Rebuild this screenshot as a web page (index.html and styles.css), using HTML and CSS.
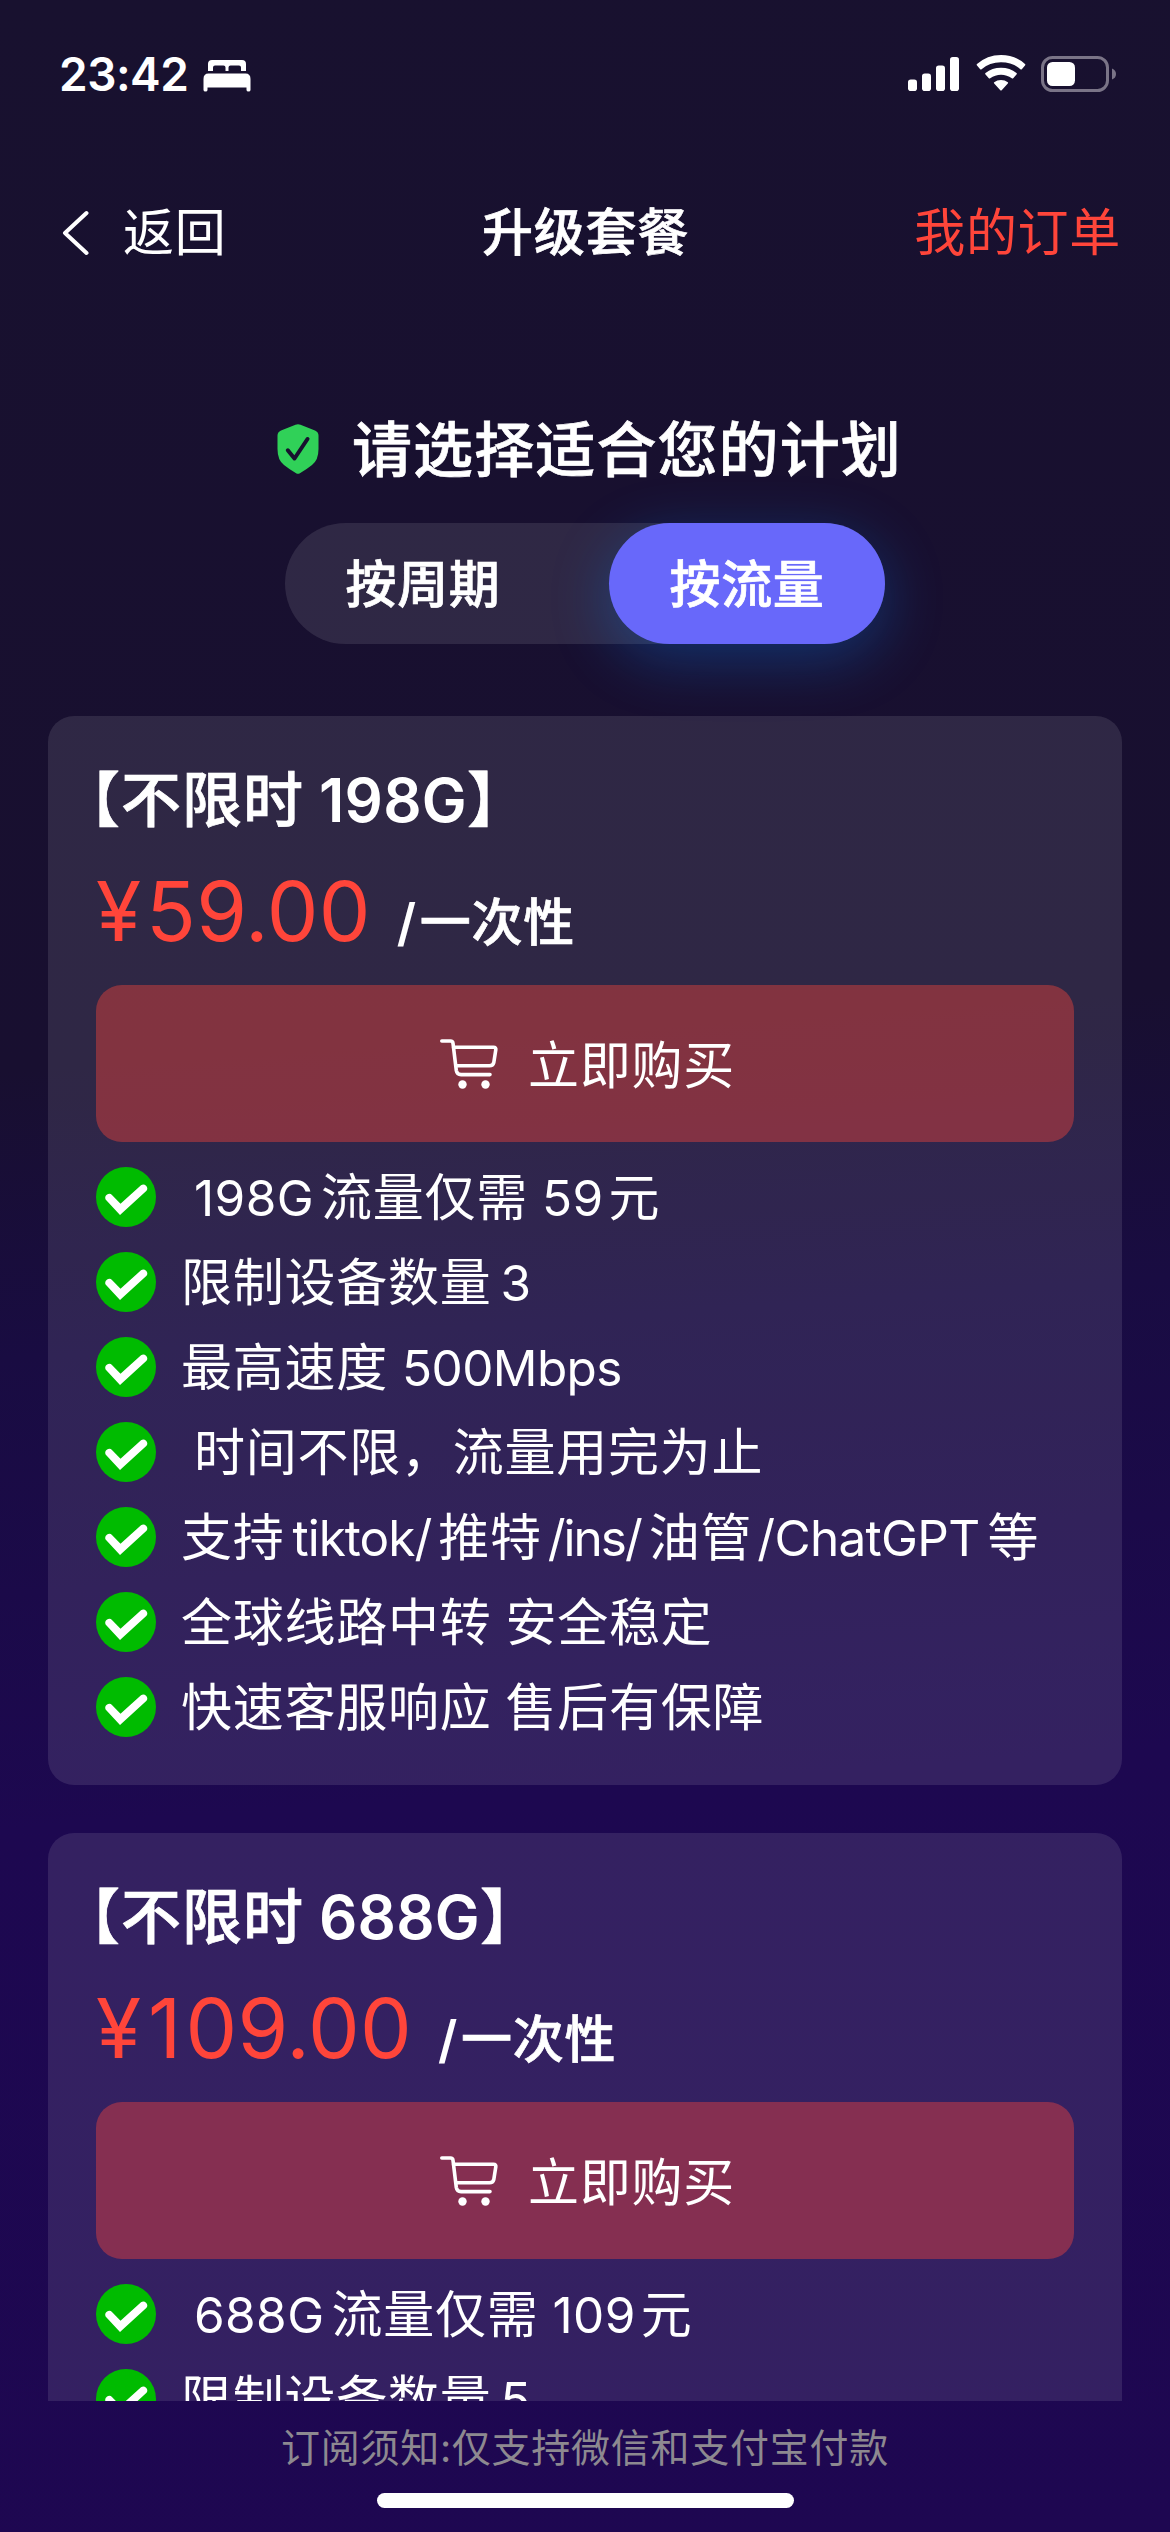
FILE: index.html
```html
<!DOCTYPE html>
<html lang="zh-CN">
<head>
<meta charset="utf-8">
<title>升级套餐</title>
<link rel="stylesheet" href="styles.css">
</head>
<body>
<svg width="0" height="0" class="defs" aria-hidden="true">
  <symbol id="cart" viewBox="0 0 58 50">
    <g fill="none" stroke="#fff" stroke-width="3.6" stroke-linecap="round" stroke-linejoin="round">
      <path d="M1.800 2H10.500Q12.700 2 13 4.200L16.300 31.500Q17 35.600 21 35.600H50"/>
      <path d="M13.600 8.300H53.500Q56.200 8.300 55.800 10.800L53.800 23.500Q53 26.700 49.500 26.700H16.200"/>
    </g>
    <circle cx="22.500" cy="45.500" r="4.200" fill="#fff"/>
    <circle cx="45.500" cy="45.500" r="4.200" fill="#fff"/>
  </symbol>
  <symbol id="check" viewBox="0 0 60 60">
    <circle cx="30" cy="30" r="30" fill="#00bb00"/>
    <path d="M9.600 32.500A4 4 0 0 1 16.200 28.200L24.500 36.800L45 18.200A4 4 0 0 1 50.500 23.800L24 48Z" fill="#fff"/>
  </symbol>
</svg>

<div class="screen">
  <header class="status">
    <div class="status-left">
      <span class="clock">23:42</span>
      <svg class="bed" width="48" height="33" viewBox="0 0 48 33" fill="#fff"><path d="M5 12V5Q5 1 9 1H39Q43 1 43 5V12H38V8.500Q38 6.500 36 6.500H27.500Q25.500 6.500 25.500 8.500V12H22.500V8.500Q22.500 6.500 20.500 6.500H12Q10 6.500 10 8.500V12ZM5.500 14.500H42.500Q47.500 14.500 47.500 20V31Q47.500 32.500 45.500 32.500Q43.500 32.500 43.500 31V28.500H4.500V31Q4.500 32.500 2.500 32.500Q.5 32.500 .5 31V20Q.5 14.500 5.500 14.500Z"/></svg>
    </div>
    <div class="status-right">
      <svg width="52" height="36" viewBox="0 0 52 36" fill="#fff"><rect x="0" y="23.500" width="9" height="11.500" rx="2.800"/><rect x="14" y="17.500" width="9" height="17.500" rx="2.800"/><rect x="28" y="9.500" width="9" height="25.500" rx="2.800"/><rect x="42" y="1" width="9" height="34" rx="2.800"/></svg>
      <svg class="wifi" width="50" height="36" viewBox="0 0 50 36" fill="#fff"><path d="M1 10.500Q.3 9.800 1 9.100Q11 0 25 0Q39 0 49 9.100Q49.700 9.800 49 10.500L45.800 14.200Q45.100 14.800 44.400 14.200Q36.500 7.300 25 7.300Q13.500 7.300 5.600 14.200Q4.900 14.800 4.200 14.200ZM9.500 19.500Q8.800 18.800 9.500 18.100Q16 12.800 25 12.800Q34 12.800 40.500 18.100Q41.200 18.800 40.500 19.500L37.200 23.200Q36.500 23.800 35.800 23.200Q31 19.700 25 19.700Q19 19.700 14.200 23.200Q13.500 23.800 12.800 23.200ZM18.200 28.500Q17.500 27.800 18.200 27.200Q21 25 25 25Q29 25 31.800 27.200Q32.500 27.800 31.800 28.500L25.700 35.200Q25 35.800 24.300 35.200Z"/></svg>
      <svg class="battery" width="76" height="38" viewBox="0 0 76 38"><rect x="1.500" y="2.500" width="65" height="33" rx="10" fill="none" stroke="#7a7487" stroke-width="3"/><rect x="6" y="7" width="28" height="24" rx="5.500" fill="#fff"/><path d="M71 13.500Q75 15 75 19Q75 23 71 24.500Z" fill="#7a7487"/></svg>
    </div>
  </header>

  <nav class="nav">
    <a class="back"><svg width="27" height="46" viewBox="0 0 27 46" fill="none" stroke="#fff" stroke-width="4" stroke-linecap="round" stroke-linejoin="round"><path d="M24.500 3L3 23L24.500 43"/></svg><span>返回</span></a>
    <h1>升级套餐</h1>
    <a class="orders">我的订单</a>
  </nav>

  <section class="intro">
    <svg width="42" height="50" viewBox="0 0 42 50"><path d="M18.500 .8Q21 -.4 23.500 .8L38 6.500Q41.500 8 41.500 11.500V25Q41.500 36 35 41Q29.500 45.500 22.500 49.400Q21 50.200 19.500 49.400Q12.500 45.500 7 41Q.5 36 .5 25V11.500Q.5 8 4 6.500Z" fill="#30d158"/><path d="M10.800 26.300L17.500 34.500L30.500 15" fill="none" stroke="#18102f" stroke-width="4" stroke-linecap="round" stroke-linejoin="round"/></svg>
    <h2>请选择适合您的计划</h2>
  </section>

  <div class="toggle"><button class="tab">按周期</button><button class="tab active">按流量</button></div>

  <main class="plans">
    <article class="card">
      <h3><span class="open">【</span>不限时<span class="num">198G</span><span class="close">】</span></h3>
      <div class="price"><span class="amount"><span class="yen">¥</span>59.00</span><span class="period"><i>/</i>一次性</span></div>
      <button class="buy"><svg width="58" height="50"><use href="#cart"/></svg><span>立即购买</span></button>
      <ul>
        <li><svg width="60" height="60"><use href="#check"/></svg><span class="lead"><b class="quota">198G</b>流量仅需<b class="yuan">59</b>元</span></li>
        <li><svg width="60" height="60"><use href="#check"/></svg><span>限制设备数量<b class="one">3</b></span></li>
        <li><svg width="60" height="60"><use href="#check"/></svg><span>最高速度<b class="speed">500Mbps</b></span></li>
        <li><svg width="60" height="60"><use href="#check"/></svg><span class="lead">时间不限，流量用完为止</span></li>
        <li><svg width="60" height="60"><use href="#check"/></svg><span>支持<b class="tik">tiktok/</b>推特<b class="ins">/ins/</b>油管<b class="gpt">/ChatGPT</b>等</span></li>
        <li><svg width="60" height="60"><use href="#check"/></svg><span>全球线路中转<s></s>安全稳定</span></li>
        <li><svg width="60" height="60"><use href="#check"/></svg><span>快速客服响应<s></s>售后有保障</span></li>
      </ul>
    </article>
    <article class="card">
      <h3><span class="open">【</span>不限时<span class="num">688G</span><span class="close">】</span></h3>
      <div class="price"><span class="amount"><span class="yen">¥</span><span class="wide">1</span>09.00</span><span class="period"><i>/</i>一次性</span></div>
      <button class="buy"><svg width="58" height="50"><use href="#cart"/></svg><span>立即购买</span></button>
      <ul>
        <li><svg width="60" height="60"><use href="#check"/></svg><span class="lead"><b class="quota">688G</b>流量仅需<b class="yuan">109</b>元</span></li>
        <li><svg width="60" height="60"><use href="#check"/></svg><span>限制设备数量<b class="one">5</b></span></li>
      </ul>
    </article>
  </main>

  <footer>
    <p>订阅须知:仅支持微信和支付宝付款</p>
    <div class="home"></div>
  </footer>
</div>
</body>
</html>
```

FILE: styles.css
```css
* { box-sizing: border-box; margin: 0; padding: 0; }
body {
  width: 1170px;
  height: 2532px;
  overflow: hidden;
  color: #fff;
  font-family: Inter, "Noto Sans CJK SC", sans-serif;
  background: #18102f;
}
.defs { display: none; }
.screen {
  width: 1170px;
  height: 2532px;
  display: flex;
  flex-direction: column;
  background: linear-gradient(176deg, #18112f 0%, #180f30 41%, #190c42 52%, #1d0850 70%, #1e0751 100%);
}
svg { display: block; flex: none; }
button { border: 0; background: none; color: inherit; font: inherit; }
a, h1, h2, .tab, .buy, li, .period { white-space: nowrap; }
h1, h2, h3, .tab, .period { -webkit-text-stroke: 0.7px currentColor; }

.status {
  height: 150px;
  padding: 0 53px 0 59px;
  display: flex;
  justify-content: space-between;
}
.status-left, .status-right { display: flex; align-items: flex-start; }
.clock { margin-top: 46px; width: 144px; font-size: 46px; font-weight: 600; line-height: 56px; letter-spacing: -0.5px; }
.bed { margin-top: 59px; }
.status-right { padding-top: 56px; }
.wifi { margin: -1px 15px 0 16px; }
.battery { margin-top: -1px; }

.nav {
  height: 164px;
  padding: 1px 49px 0 62px;
  display: grid;
  grid-template-columns: 1fr auto 1fr;
  align-items: center;
  font-size: 51px;
  line-height: 76px;
  letter-spacing: 0.7px;
}
.back { display: flex; align-items: center; gap: 34px; }
.nav h1 { font-size: 51px; font-weight: 500; margin-right: 12px; }
.orders { justify-self: end; color: #ff453a; }

.intro {
  height: 209px;
  padding-top: 62px;
  padding-left: 277px;
  display: flex;
  gap: 33px;
  align-items: center;
}
.intro svg { margin-top: -2px; }
.intro h2 { font-size: 60px; font-weight: 500; line-height: 88px; letter-spacing: 1.1px; }

.toggle {
  width: 600px;
  height: 121px;
  margin-left: 285px;
  display: flex;
  justify-content: space-between;
  border-radius: 61px;
  background: rgba(255, 255, 255, 0.1);
}
.tab { width: 276px; height: 121px; padding-bottom: 5px; border-radius: 61px; font-size: 51px; font-weight: 500; letter-spacing: 0.7px; }
.active { background: #6868fa; box-shadow: 0 15px 60px rgba(10, 132, 255, 0.3); }

.plans {
  height: 1757px;
  padding: 72px 48px 0;
  display: flex;
  flex-direction: column;
  gap: 48px;
  overflow: hidden;
}
.card {
  flex: none;
  height: 1069px;
  padding: 0 48px;
  border-radius: 26px;
  background: rgba(255, 255, 255, 0.1);
}
.card h3 {
  height: 128px;
  padding-top: 40px;
  display: flex;
  font-size: 60px;
  font-weight: 500;
  line-height: 88px;
  letter-spacing: 1px;
  white-space: nowrap;
}
.open { margin-left: -36px; }
.num { margin-left: 15px; font-weight: 600; letter-spacing: 0.2px; -webkit-text-stroke: 0; }
.price { height: 141px; display: flex; align-items: baseline; white-space: nowrap; }
.amount { color: #ff453a; font-size: 82px; line-height: 136px; font-weight: 400; letter-spacing: 0.2px; }
.yen { letter-spacing: 5px; }
.wide { letter-spacing: 4px; margin-left: 2px; }
.period { margin-left: 26px; font-size: 51px; font-weight: 500; letter-spacing: 0.7px; }
.period i { font-style: normal; font-weight: 600; margin-right: 3px; -webkit-text-stroke: 0; }
.buy {
  width: 978px;
  height: 157px;
  padding-left: 5px;
  display: flex;
  align-items: center;
  justify-content: center;
  gap: 30px;
  border-radius: 26px;
  background: rgba(255, 69, 58, 0.4);
  font-size: 51px;
  letter-spacing: 0.7px;
}
.buy span { padding-bottom: 4px; }
ul { list-style: none; padding-top: 25px; display: flex; flex-direction: column; gap: 25px; }
li { height: 60px; display: flex; align-items: center; gap: 25px; font-size: 51px; line-height: 60px; letter-spacing: 0.75px; }
li span { padding-top: 1px; }
.lead { padding-left: 13px; }
li b { font-weight: 400; font-size: 49.5px; letter-spacing: -0.3px; }
li .quota { margin-right: 7px; letter-spacing: 0.4px; }
li .yuan { margin-left: 14px; margin-right: 5px; letter-spacing: 0.4px; }
li .one { margin-left: 9px; }
li .speed { margin-left: 14px; letter-spacing: -0.6px; }
li .tik { margin: 0 7px 0 8px; letter-spacing: -1px; }
li .ins { margin: 0 8px 0 6px; letter-spacing: -2px; }
li .gpt { margin: 0 8px 0 5px; letter-spacing: -0.7px; }
s { display: inline-block; width: 14px; }

footer { flex: 1; display: flex; flex-direction: column; align-items: center; }
footer p { margin-top: 18px; font-size: 39px; line-height: 58px; letter-spacing: 0.75px; color: #8d8990; }
.home { margin-top: 16px; width: 417px; height: 15px; border-radius: 8px; background: #fff; }
```
